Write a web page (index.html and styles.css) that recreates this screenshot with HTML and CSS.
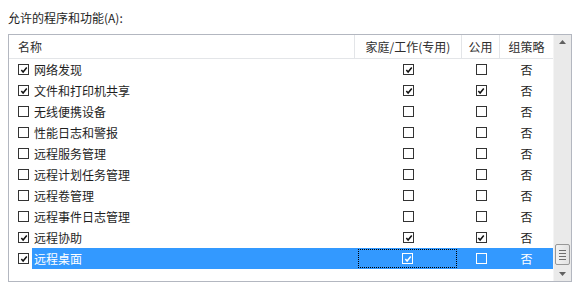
FILE: index.html
```html
<!DOCTYPE html>
<html lang="zh-CN">
<head>
<meta charset="utf-8">
<title>允许的程序和功能</title>
<link rel="stylesheet" href="styles.css">
</head>
<body>
<div class="label">允许的程序和功能(A):</div>
<div class="box">
  <div class="list">
    <div class="row head">
      <div class="c name">名称</div>
      <div class="c mid">家庭/工作(专用)</div>
      <div class="c mid">公用</div>
      <div class="c mid last">组策略</div>
    </div>
    <div class="row">
      <div class="c name"><span class="cb"><svg viewBox="0 0 9 9"><polyline points="1.5,4.5 3.5,6.8 7.6,1.6"/></svg></span><span class="t">网络发现</span></div>
      <div class="c mid"><span class="cb"><svg viewBox="0 0 9 9"><polyline points="1.5,4.5 3.5,6.8 7.6,1.6"/></svg></span></div>
      <div class="c mid"><span class="cb"></span></div>
      <div class="c mid last">否</div>
    </div>
    <div class="row">
      <div class="c name"><span class="cb"><svg viewBox="0 0 9 9"><polyline points="1.5,4.5 3.5,6.8 7.6,1.6"/></svg></span><span class="t">文件和打印机共享</span></div>
      <div class="c mid"><span class="cb"><svg viewBox="0 0 9 9"><polyline points="1.5,4.5 3.5,6.8 7.6,1.6"/></svg></span></div>
      <div class="c mid"><span class="cb"><svg viewBox="0 0 9 9"><polyline points="1.5,4.5 3.5,6.8 7.6,1.6"/></svg></span></div>
      <div class="c mid last">否</div>
    </div>
    <div class="row">
      <div class="c name"><span class="cb"></span><span class="t">无线便携设备</span></div>
      <div class="c mid"><span class="cb"></span></div>
      <div class="c mid"><span class="cb"></span></div>
      <div class="c mid last">否</div>
    </div>
    <div class="row">
      <div class="c name"><span class="cb"></span><span class="t">性能日志和警报</span></div>
      <div class="c mid"><span class="cb"></span></div>
      <div class="c mid"><span class="cb"></span></div>
      <div class="c mid last">否</div>
    </div>
    <div class="row">
      <div class="c name"><span class="cb"></span><span class="t">远程服务管理</span></div>
      <div class="c mid"><span class="cb"></span></div>
      <div class="c mid"><span class="cb"></span></div>
      <div class="c mid last">否</div>
    </div>
    <div class="row">
      <div class="c name"><span class="cb"></span><span class="t">远程计划任务管理</span></div>
      <div class="c mid"><span class="cb"></span></div>
      <div class="c mid"><span class="cb"></span></div>
      <div class="c mid last">否</div>
    </div>
    <div class="row">
      <div class="c name"><span class="cb"></span><span class="t">远程卷管理</span></div>
      <div class="c mid"><span class="cb"></span></div>
      <div class="c mid"><span class="cb"></span></div>
      <div class="c mid last">否</div>
    </div>
    <div class="row">
      <div class="c name"><span class="cb"></span><span class="t">远程事件日志管理</span></div>
      <div class="c mid"><span class="cb"></span></div>
      <div class="c mid"><span class="cb"></span></div>
      <div class="c mid last">否</div>
    </div>
    <div class="row">
      <div class="c name"><span class="cb"><svg viewBox="0 0 9 9"><polyline points="1.5,4.5 3.5,6.8 7.6,1.6"/></svg></span><span class="t">远程协助</span></div>
      <div class="c mid"><span class="cb"><svg viewBox="0 0 9 9"><polyline points="1.5,4.5 3.5,6.8 7.6,1.6"/></svg></span></div>
      <div class="c mid"><span class="cb"><svg viewBox="0 0 9 9"><polyline points="1.5,4.5 3.5,6.8 7.6,1.6"/></svg></span></div>
      <div class="c mid last">否</div>
    </div>
    <div class="row sel">
      <div class="c name"><span class="cb"><svg viewBox="0 0 9 9"><polyline points="1.5,4.5 3.5,6.8 7.6,1.6"/></svg></span><span class="t">远程桌面</span></div>
      <div class="c mid focus"><div class="focus-in"><span class="cb"><svg viewBox="0 0 9 9"><polyline points="1.5,4.5 3.5,6.8 7.6,1.6"/></svg></span></div></div>
      <div class="c mid"><span class="cb"></span></div>
      <div class="c mid last">否</div>
    </div>
  </div>
  <div class="sb">
    <div class="sb-btn up"><svg viewBox="0 0 7 4"><polygon points="0,4 3.5,0 7,4"/></svg></div>
    <div class="sb-track">
      <div class="thumb"><span></span><span></span><span></span><span></span></div>
    </div>
    <div class="sb-btn down"><svg viewBox="0 0 7 4"><polygon points="0,0 7,0 3.5,4"/></svg></div>
  </div>
</div>
</body>
</html>
```

FILE: styles.css
```css
html, body {
  margin: 0;
  padding: 0;
  background: #ffffff;
}
body {
  padding: 8px;
  font-family: "Noto Sans CJK SC", "Microsoft YaHei", sans-serif;
  font-size: 12px;
  color: #1e1e1e;
}
.label {
  height: 20px;
  line-height: 20px;
  margin-bottom: 6px;
}
.box {
  display: flex;
  height: 246px;
  border: 1px solid #b3b7c0;
  background: #fff;
}
.list {
  flex: 1;
  display: flex;
  flex-direction: column;
}
.row {
  display: grid;
  grid-template-columns: 346px 107px 38px 1fr;
  height: 21px;
  align-items: stretch;
}
.row.head {
  height: 23px;
  border-bottom: 1px solid #e3e5e8;
  color: #2e2e2e;
}
.c {
  display: flex;
  align-items: center;
  min-width: 0;
}
.head .c {
  border-right: 1px solid #e3e5e8;
}
.head .c.last {
  border-right: none;
}
.head .name {
  padding-left: 7px;
}
.row .name {
  padding-left: 9px;
}
.head .mid {
  justify-content: center;
}
.mid {
  justify-content: center;
}
.cb {
  box-sizing: border-box;
  width: 11px;
  height: 11px;
  border: 1px solid #333;
  background: #fff;
  display: inline-flex;
  align-items: center;
  justify-content: center;
  flex: none;
}
.cb svg {
  width: 8px;
  height: 8px;
  fill: none;
  stroke: #111;
  stroke-width: 1.7;
}
.t {
  margin-left: 3px;
  padding-left: 2px;
  height: 21px;
  line-height: 21px;
  flex: 1;
}
.row.mid-gap {}
.row.sel .t {
  background: #3399ff;
  color: #fff;
}
.row.sel .mid {
  background: #3399ff;
  color: #fff;
}
.row.sel .cb {
  border-color: #fff;
  background: #3399ff;
}
.row.sel .cb svg {
  stroke: #fff;
}
.row.sel .name .cb {
  border-color: #333;
  background: #fff;
}
.row.sel .name .cb svg {
  stroke: #111;
}
.focus {
  padding: 1px 5px 1px 3px;
  align-items: stretch;
}
.focus-in {
  flex: 1;
  border: 1px dotted #000;
  display: flex;
  align-items: center;
  justify-content: center;
}
.sb {
  width: 17px;
  display: flex;
  flex-direction: column;
  background: #eaeaea;
  border-left: 1px solid #f4f4f4;
}
.sb-btn {
  height: 14px;
  display: flex;
  align-items: center;
  justify-content: center;
}
.sb-btn.down {
  height: 15px;
}
.sb-btn svg {
  width: 7px;
  height: 4px;
  fill: #606060;
}
.sb-track {
  flex: 1;
  display: flex;
  flex-direction: column;
  justify-content: flex-end;
  align-items: center;
}
.thumb {
  box-sizing: border-box;
  width: 15px;
  height: 21px;
  margin-bottom: 1px;
  border: 1px solid #979797;
  border-radius: 2px;
  background: linear-gradient(to right, #f2f2f2, #e2e2e2);
  display: flex;
  flex-direction: column;
  align-items: center;
  justify-content: center;
  gap: 2px;
}
.thumb span {
  display: block;
  width: 7px;
  height: 1px;
  background: #6e6e6e;
}
```
